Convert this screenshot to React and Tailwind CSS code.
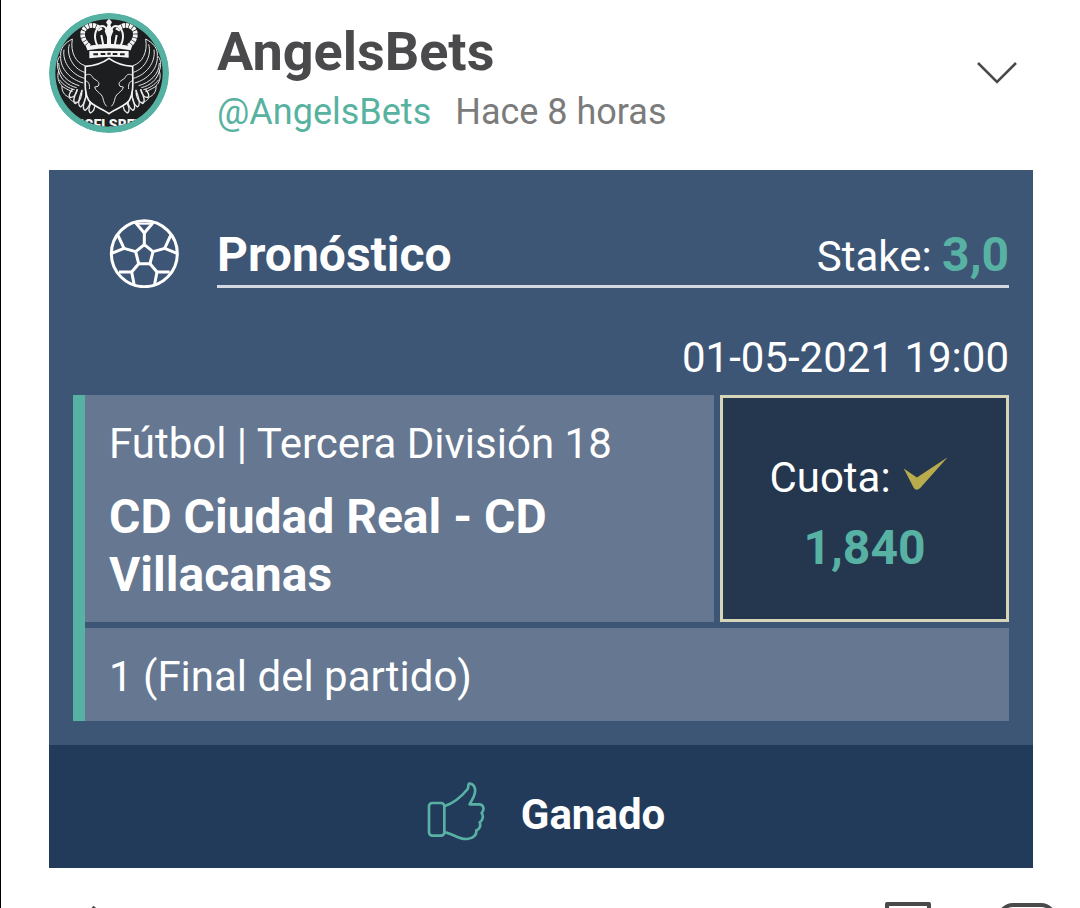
import React, { useState } from "react";

// One half of the wings, the other half is mirrored
const Wing = () => (
  <g fill="none" stroke="#e8e8e8" strokeWidth="3" strokeLinejoin="round">
    <path d="M97 100 C90 140 108 172 135 180" />
    <path d="M97 100 C74 112 60 128 62 150 C50 160 50 180 56 196 C50 214 56 232 66 240 C64 256 74 270 86 274 C92 286 102 290 112 290" />
    <path d="M88 116 C78 150 100 190 134 200" />
    <path d="M72 132 C66 170 96 208 134 218" />
    <path d="M62 152 C60 190 92 222 130 232" />
    <path d="M56 172 C56 206 86 232 118 240" />
    <path d="M56 196 C62 222 84 240 110 246" />
    <path d="M58 222 C70 238 86 248 104 252" />
    <path d="M66 242 C80 250 90 256 98 258" />
    <path d="M98 250 C88 262 84 272 92 276 C104 274 110 262 112 250" strokeWidth="4" />
    <path d="M112 252 C102 272 98 290 106 294 C120 288 126 270 126 252" strokeWidth="4" />
    <path d="M126 254 C116 280 112 300 122 304 C136 294 138 276 138 258" strokeWidth="4" />
    <path d="M140 270 C130 290 126 312 136 314 C146 306 150 294 150 286" strokeWidth="4" />
    <path d="M154 292 C146 302 144 318 152 322 C162 316 164 308 164 302" strokeWidth="4" />
    <path d="M138 208 C150 202 156 210 160 218 C172 226 182 230 174 242 L164 244 C166 256 176 258 184 268 C192 278 188 290 200 302" />
    <path d="M138 226 C146 228 150 238 148 250" />
  </g>
);

const Avatar = () => (
  <svg viewBox="27 22 360 360" className="size-[120px] shrink-0 rounded-full" role="img" aria-label="AngelsBets">
    <defs>
      <clipPath id="avatar-clip">
        <circle cx="207" cy="202" r="161" />
      </clipPath>
    </defs>
    <circle cx="207" cy="202" r="180" fill="#55b1a2" />
    <g clipPath="url(#avatar-clip)">
      <rect x="27" y="22" width="360" height="360" fill="#1d1e20" />
      <Wing />
      <g transform="translate(414 0) scale(-1 1)">
        <Wing />
      </g>
      <path
        d="M207 158 C186 174 162 180 136 182 C136 230 132 262 146 284 C160 304 188 308 207 324 C226 308 254 304 268 284 C282 262 278 230 278 182 C252 180 228 174 207 158Z"
        fill="none"
        stroke="#f4f4f4"
        strokeWidth="5"
      />
      <g fill="none" stroke="#f4f4f4">
        <path d="M148 122 C126 104 120 76 140 64 C156 54 174 60 182 74" strokeWidth="14" strokeDasharray="9 2" />
        <path d="M266 122 C288 104 294 76 274 64 C258 54 240 60 232 74" strokeWidth="14" strokeDasharray="9 2" />
        <path d="M172 120 C160 94 164 72 180 62 C192 58 200 66 202 78" strokeWidth="6" />
        <path d="M242 120 C254 94 250 72 234 62 C222 58 214 66 212 78" strokeWidth="6" />
        <path d="M190 120 L184 88 M224 120 L230 88" strokeWidth="6" />
      </g>
      <g fill="#f4f4f4">
        <path d="M207 38 L216 50 L211 58 L220 76 L213 94 L213 122 L201 122 L201 94 L194 76 L203 58 L198 50Z" />
        <path d="M138 122 Q207 106 276 122 L272 134 Q207 122 142 134Z" />
        <path d="M148 136 H266 V156 Q207 150 148 158Z" />
      </g>
      <path d="M160 146 H174 M182 145 H196 M202 144 H212 M218 145 H232 M240 146 H254" stroke="#1d1e20" strokeWidth="6" />
      <text
        x="205"
        y="374"
        textAnchor="middle"
        fill="#f4f4f4"
        fontFamily="Roboto, sans-serif"
        fontWeight="900"
        fontSize="42"
      >
        ANGELSBETS
      </text>
    </g>
  </svg>
);

const SoccerBall = () => (
  <svg viewBox="0 0 210 210" className="size-[70px] shrink-0" fill="none" stroke="#fff" strokeWidth="9" strokeLinejoin="round">
    <circle cx="106" cy="107" r="99" />
    <path d="M106 80 L132 101 L123 137 H89 L80 101Z" />
    <path d="M106 80 V45 M132 101 L167 91 M123 137 L144 162 M89 137 L68 162 M80 101 L45 91" />
    <path d="M80 14 L106 45 L132 14" />
    <path d="M80 17 H132" strokeWidth="6" />
    <path d="M185 52 L167 91 L204 106" />
    <path d="M27 52 L45 91 L8 106" />
    <path d="M182 162 H144 L137 198 M30 162 H68 L75 198" />
  </svg>
);

const ThumbUp = () => (
  <svg viewBox="0 0 174 180" className="h-[60px] w-[58px] shrink-0" fill="none" stroke="#58b2a4" strokeWidth="8" strokeLinejoin="round" strokeLinecap="round">
    <rect x="6" y="66" width="46" height="98" rx="10" />
    <path d="M52 76 C80 66 106 44 122 24 C126 16 122 10 126 8 C138 6 146 18 144 34 C142 48 134 58 128 70 H158 C172 72 172 88 164 96 C170 104 168 118 158 124 C162 134 158 146 148 148 C150 162 138 172 120 174 C92 176 76 156 52 154" />
  </svg>
);

const Check = () => (
  <svg viewBox="0 0 134 100" className="mb-2 h-[33px] w-[45px]" fill="#b9ac4c">
    <path d="M1 35 L41 62 L134 1 L51 94 Q40 104 32 95Z" />
  </svg>
);

const App = () => {
  const [open, setOpen] = useState(false);

  return (
    <div className="h-screen overflow-hidden border-l border-black bg-white pt-[13px] pr-[47px] pl-12 font-[Roboto,sans-serif]">
      {/* Author */}
      <header className="flex items-start gap-12">
        <Avatar />
        <div className="flex-grow pt-2">
          <h1 className="text-[54px] leading-[62px] font-bold text-[#4a4a4c]">AngelsBets</h1>
          <p className="flex gap-6 text-[36px] leading-[58px] text-[#7b7b7b]">
            <a href="#profile" className="text-[#58b2a0]">
              @AngelsBets
            </a>
            <span>Hace 8 horas</span>
          </p>
        </div>
        <button className="mt-12 mr-4 cursor-pointer" aria-label="Opciones" aria-expanded={open} onClick={() => setOpen(!open)}>
          <svg viewBox="0 0 40 24" className="h-6 w-10" fill="none" stroke="#4a4a4c" strokeWidth="2.5">
            <path d="M1 2 L20 21 L39 2" />
          </svg>
        </button>
      </header>

      {/* Pick */}
      <main className="mt-[29px] bg-[#3e5675] text-white">
        <div className="px-6 pt-12 pb-6">
          <div className="flex items-end gap-[38px] pl-9">
            <SoccerBall />
            <div className="flex flex-grow items-baseline justify-between border-b-3 border-[#d5d9e2]">
              <h2 className="text-[48px] leading-[56px] font-bold">Pronóstico</h2>
              <p className="text-[42px] leading-[56px]">
                Stake: <b className="text-[48px] text-[#58b2a4]">3,0</b>
              </p>
            </div>
          </div>
          <p className="mt-[38px] pb-[5px] text-right text-[42px] leading-[64px]">01-05-2021 19:00</p>

          <div className="flex flex-col gap-[6px] border-l-12 border-[#58b2a4]">
            <div className="flex gap-[6px]">
              <div className="flex-grow bg-[#657791] px-6 pt-[21px] pb-[18px]">
                <p className="text-[42px] leading-[56px]">Fútbol | Tercera División 18</p>
                <p className="mt-4 max-w-[480px] text-[48px] leading-[58px] font-bold">CD Ciudad Real - CD Villacanas</p>
              </div>
              <div className="flex w-[289px] shrink-0 flex-col items-center justify-center border-3 border-[#d6d5b7] bg-[#24374f] pt-2">
                <p className="flex items-center gap-3 pr-3 text-[42px] leading-[70px]">
                  Cuota: <Check />
                </p>
                <b className="text-[48px] leading-[70px] text-[#58b2a4]">1,840</b>
              </div>
            </div>
            <p className="bg-[#657791] px-6 pt-[18px] pb-[14px] text-[42px] leading-[61px]">1 (Final del partido)</p>
          </div>
        </div>

        <div className="flex items-end justify-center gap-9 bg-[#233b5b] pt-9 pb-[27px] pl-[10px]">
          <ThumbUp />
          <b className="text-[42px] leading-[52px]">Ganado</b>
        </div>
      </main>

      {/* Actions */}
      <footer className="mt-8 -mr-6 flex items-start justify-between pl-6">
        <button className="cursor-pointer" aria-label="Compartir">
          <svg viewBox="0 0 60 60" className="size-[60px]" fill="none" stroke="#4a4a4c" strokeWidth="4">
            <path d="M22 7 L6 26 L22 44 M6 26 H54" />
          </svg>
        </button>
        <div className="flex gap-13">
          <button className="cursor-pointer" aria-label="Guardar">
            <svg viewBox="0 0 60 60" className="size-[60px]" fill="none" stroke="#4a4a4c" strokeWidth="4">
              <path d="M2 4 H44 V56 L23 40 L2 56Z" strokeLinejoin="round" />
            </svg>
          </button>
          <button className="cursor-pointer" aria-label="Comentar">
            <svg viewBox="0 0 60 60" className="size-[60px]" fill="none" stroke="#4a4a4c" strokeWidth="4">
              <rect x="2" y="5" width="56" height="46" rx="14" />
            </svg>
          </button>
        </div>
      </footer>
    </div>
  );
};

export default App;
